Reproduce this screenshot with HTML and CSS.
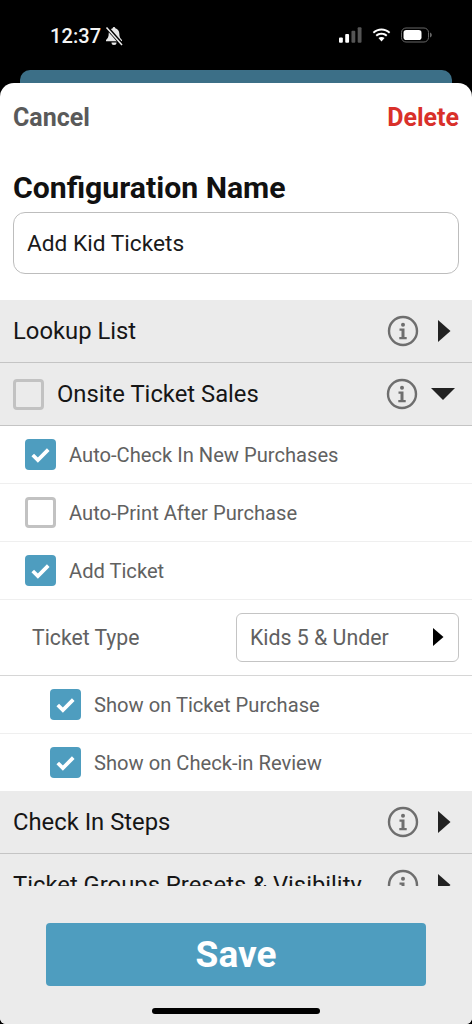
FILE: index.html
```html
<!DOCTYPE html>
<html lang="en">
<head>
<meta charset="utf-8">
<title>Configuration</title>
<link rel="stylesheet" href="styles.css">
</head>
<body>
<div class="phone">
  <div class="status">
    <div class="status-left">
      <span class="time">12:37</span>
      <svg class="bell" viewBox="0 0 20 20" width="20" height="20"><path d="M10 1c.8 0 1.300.6 1.300 1.300 2.500.6 4 2.700 4 5.200 0 3.300 1 4.900 2.700 6.500v1.200H2V14c1.700-1.600 2.700-3.200 2.700-6.500 0-2.500 1.500-4.600 4-5.200C8.700 1.600 9.200 1 10 1z" fill="#e8e8e8"/><path d="M7.500 16.500h5a2.500 2.500 0 0 1-5 0z" fill="#e8e8e8"/><path d="M3 1.500l15 17" stroke="#000" stroke-width="3.600"/><path d="M2.500 1.500l15.500 17.500" stroke="#eee" stroke-width="1.500"/></svg>
    </div>
    <div class="status-right">
      <svg class="signal" viewBox="0 0 24 16" width="23" height="16"><rect x="0" y="10.500" width="4" height="5.500" rx="1" fill="#fff"/><rect x="6.500" y="7" width="4" height="9" rx="1" fill="#fff"/><rect x="13" y="3.500" width="4" height="12.500" rx="1" fill="#555"/><rect x="19.500" y="0" width="4" height="16" rx="1" fill="#555"/></svg>
      <svg class="wifi" viewBox="0 0 20 15" width="19" height="15"><path d="M10 2.200c3 0 5.800 1.200 7.900 3.100l1.300-1.500C16.700 1.500 13.500 0 10 0S3.300 1.500.800 3.800l1.300 1.500C4.200 3.400 7 2.200 10 2.200z" fill="#fff"/><path d="M10 6.700c1.800 0 3.500.7 4.800 1.800l1.400-1.500C14.500 5.400 12.400 4.500 10 4.500s-4.500.9-6.200 2.500l1.400 1.500C6.500 7.400 8.200 6.700 10 6.700z" fill="#fff"/><path d="M10 9c-1.200 0-2.300.4-3.200 1.200l3.200 3.600 3.200-3.600C12.300 9.400 11.200 9 10 9z" fill="#fff"/></svg>
      <svg class="battery" viewBox="0 0 31 16" width="31" height="16"><rect x=".5" y="1" width="27" height="14" rx="4.500" fill="none" stroke="#666"/><rect x="2.500" y="3" width="18" height="10" rx="2.800" fill="#fff"/><path d="M29 5.500c1.200.4 1.800 1.300 1.800 2.500S30.200 10.100 29 10.500z" fill="#666"/></svg>
    </div>
  </div>
  <div class="behind"></div>
  <main class="sheet">
    <div class="sheet-top">
      <div class="actions">
        <span class="cancel">Cancel</span>
        <span class="delete">Delete</span>
      </div>
      <h1 class="title">Configuration Name</h1>
      <div class="name-input">Add Kid Tickets</div>
    </div>
    <div class="scroll">
      <div class="section">
        <span class="section-label">Lookup List</span>
        <svg class="info" viewBox="0 0 32 32" width="32" height="32"><use href="#i-info"/></svg>
        <svg class="tri-right" viewBox="0 0 14 24" width="14" height="24"><path d="M1 1l12.500 11L1 23z" fill="#222"/></svg>
      </div>
      <div class="section">
        <span class="box box-section"></span>
        <span class="section-label">Onsite Ticket Sales</span>
        <svg class="info" viewBox="0 0 32 32" width="32" height="32"><use href="#i-info"/></svg>
        <svg class="tri-down" viewBox="0 0 24 14" width="24" height="14"><path d="M0 1h24L12 13z" fill="#222"/></svg>
      </div>
      <div class="row">
        <span class="box checked"><svg viewBox="0 0 32 32" width="31" height="31"><use href="#i-check"/></svg></span>
        <span class="row-label">Auto-Check In New Purchases</span>
      </div>
      <div class="row">
        <span class="box"></span>
        <span class="row-label">Auto-Print After Purchase</span>
      </div>
      <div class="row">
        <span class="box checked"><svg viewBox="0 0 32 32" width="31" height="31"><use href="#i-check"/></svg></span>
        <span class="row-label">Add Ticket</span>
      </div>
      <div class="row-select">
        <span class="select-label">Ticket Type</span>
        <div class="select">
          <span>Kids 5 &amp; Under</span>
          <svg viewBox="0 0 12 20" width="12" height="20"><path d="M1 1l10.500 9L1 19z" fill="#000"/></svg>
        </div>
      </div>
      <div class="row row-sub">
        <span class="box checked"><svg viewBox="0 0 32 32" width="31" height="31"><use href="#i-check"/></svg></span>
        <span class="row-label">Show on Ticket Purchase</span>
      </div>
      <div class="row row-sub row-last">
        <span class="box checked"><svg viewBox="0 0 32 32" width="31" height="31"><use href="#i-check"/></svg></span>
        <span class="row-label">Show on Check-in Review</span>
      </div>
      <div class="section">
        <span class="section-label">Check In Steps</span>
        <svg class="info" viewBox="0 0 32 32" width="32" height="32"><use href="#i-info"/></svg>
        <svg class="tri-right" viewBox="0 0 14 24" width="14" height="24"><path d="M1 1l12.500 11L1 23z" fill="#222"/></svg>
      </div>
      <div class="section">
        <span class="section-label">Ticket Groups Presets &amp; Visibility</span>
        <svg class="info" viewBox="0 0 32 32" width="32" height="32"><use href="#i-info"/></svg>
        <svg class="tri-right" viewBox="0 0 14 24" width="14" height="24"><path d="M1 1l12.500 11L1 23z" fill="#222"/></svg>
      </div>
    </div>
    <div class="footer">
      <button class="save">Save</button>
      <div class="home"></div>
    </div>
  </main>
  <svg class="defs" width="0" height="0">
    <symbol id="i-info" viewBox="0 0 32 32">
      <circle cx="16" cy="16" r="14" fill="none" stroke="#6e6e6e" stroke-width="2.400"/>
      <circle cx="16" cy="9.800" r="2" fill="#6e6e6e"/>
      <path d="M12.500 13.500h5v8.500h2.200v2.200h-7.400V22h2.200v-6.300h-2z" fill="#6e6e6e"/>
    </symbol>
    <symbol id="i-check" viewBox="0 0 32 32">
      <path d="M8 16.500l5.300 5.300L24 11" fill="none" stroke="#fff" stroke-width="3.800"/>
    </symbol>
  </svg>
</div>
</body>
</html>
```
FILE: styles.css
```css
* { box-sizing: border-box; }
html, body { margin: 0; padding: 0; }
body { background: #000; font-family: Roboto, "Liberation Sans", sans-serif; }
.phone { width: 472px; height: 1024px; display: flex; flex-direction: column; background: #000; overflow: hidden; }
.status { height: 70px; flex: none; display: flex; justify-content: space-between; align-items: flex-start; padding: 24px 40px 0 50px; color: #fff; }
.status-left { display: flex; align-items: center; gap: 3px; height: 24px; }
.time { font-size: 20px; font-weight: 500; letter-spacing: .1px; color: #f4f4f4; }
.status-right { display: flex; align-items: center; gap: 10px; height: 22px; }
.behind { height: 13px; flex: none; margin: 0 20px; background: #3c6f87; border-radius: 10px 10px 0 0; }
.sheet { flex: 1; min-height: 0; background: #fff; border-radius: 14px 14px 6px 6px; display: flex; flex-direction: column; overflow: hidden; }
.sheet-top { height: 217px; flex: none; padding: 0 13px; }
.actions { display: flex; justify-content: space-between; height: 67px; padding-top: 19px; font-size: 25px; font-weight: 700; line-height: 32px; }
.cancel { color: #5a5a5a; }
.delete { color: #d9302a; }
.title { margin: 0; font-size: 30.2px; font-weight: 700; line-height: 36px; color: #111; height: 62px; padding-top: 20px; }
.name-input { height: 62px; border: 1px solid #bdbdbd; border-radius: 12px; display: flex; align-items: center; padding-left: 13px; font-size: 22.7px; color: #1a1a1a; }
.scroll { flex: 1; min-height: 0; overflow: hidden; }
.section { height: 63px; background: #ebebeb; border-bottom: 1px solid #c4c4c4; display: flex; align-items: center; padding: 0 21px 0 13px; }
.section-label { flex: 1; font-size: 23.8px; color: #161616; white-space: nowrap; }
.info { flex: none; margin-right: 18px; }
.tri-right { flex: none; }
.tri-down { flex: none; margin: 0 -4px 0 -5px; }
.box { flex: none; width: 31px; height: 31px; border: 3px solid #c2c2c2; border-radius: 4px; background: #fff; display: block; }
.box-section { background: #ebebeb; margin-right: 13px; }
.box.checked { border: 0; background: #4e9dbf; }
.box svg { display: block; }
.row { height: 58px; display: flex; align-items: center; padding-left: 25px; border-bottom: 1px solid #efefef; background: #fff; }
.row-label { margin-left: 13px; font-size: 20.15px; color: #616161; }
.row-sub { padding-left: 50px; }
.row-last { height: 57px; border-bottom: 0; }
.row-select { height: 76px; display: flex; align-items: center; justify-content: space-between; padding: 0 13px 1px 32px; border-bottom: 1px solid #d6d6d6; }
.select-label { font-size: 21.2px; color: #616161; }
.select { width: 223px; height: 49px; border: 1px solid #c4c4c4; border-radius: 6px; display: flex; align-items: center; justify-content: space-between; padding: 0 14px 0 13px; font-size: 21.3px; color: #616161; }
.footer { height: 138px; flex: none; background: #ebebeb; display: flex; flex-direction: column; align-items: center; padding-top: 37px; }
.save { width: 380px; height: 63px; border: 0; border-radius: 4px; background: #4e9dbf; color: #fff; font-family: inherit; font-size: 37px; font-weight: 700; padding: 0; }
.home { width: 168px; height: 6px; border-radius: 3px; background: #000; margin-top: 22px; }
.defs { position: absolute; }
```
